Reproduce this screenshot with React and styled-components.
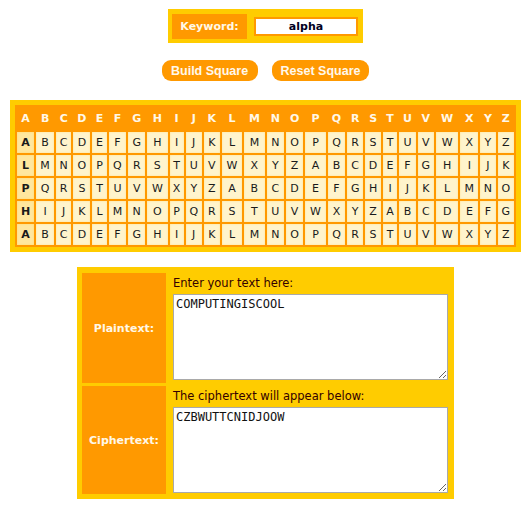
import React from "react";
import styled, { createGlobalStyle } from "styled-components";

const ALPHABET = "ABCDEFGHIJKLMNOPQRSTUVWXYZ".split("");
const KEYWORD = "alpha";

const shifted = (letter) => {
  const start = ALPHABET.indexOf(letter);
  return ALPHABET.map((_, i) => ALPHABET[(start + i) % 26]);
};

const App = () => {
  const rows = KEYWORD.toUpperCase().split("");

  return (
    <Page>
      <GlobalStyle />
      <KeywordBox>
        <KeywordLabel>Keyword:</KeywordLabel>
        <KeywordInput type="text" defaultValue={KEYWORD} />
      </KeywordBox>

      <ButtonRow>
        <PillButton>Build Square</PillButton>
        <PillButton>Reset Square</PillButton>
      </ButtonRow>

      <SquareFrame>
        <Square>
          <thead>
            <tr>
              {ALPHABET.map((l) => (
                <HeadCell key={l}>{l}</HeadCell>
              ))}
            </tr>
          </thead>
          <tbody>
            {rows.map((r, ri) => (
              <tr key={ri}>
                {shifted(r).map((l, ci) => (
                  <Cell key={ci} $key={ci === 0}>
                    {l}
                  </Cell>
                ))}
              </tr>
            ))}
          </tbody>
        </Square>
      </SquareFrame>

      <FormBox>
        <SideLabel>Plaintext:</SideLabel>
        <FieldCell>
          <Hint>Enter your text here:</Hint>
          <TextBox defaultValue="COMPUTINGISCOOL" />
        </FieldCell>
        <SideLabel>Ciphertext:</SideLabel>
        <FieldCell>
          <Hint>The ciphertext will appear below:</Hint>
          <TextBox defaultValue="CZBWUTTCNIDJOOW" $last />
        </FieldCell>
      </FormBox>
    </Page>
  );
};

export default App;

const GlobalStyle = createGlobalStyle`
  body {
    margin: 0;
    background: #fff;
    font-family: "DejaVu Sans", Verdana, sans-serif;
  }
`;

const Page = styled.div`
  display: flex;
  flex-direction: column;
  align-items: center;
  padding-top: 9px;
  width: 531px;
`;

const KeywordBox = styled.div`
  display: flex;
  align-items: center;
  gap: 7px;
  background: #ffcc00;
  padding: 5px 5px 4px 4px;
`;

const KeywordLabel = styled.div`
  width: 75px;
  height: 25px;
  display: flex;
  align-items: center;
  justify-content: center;
  background: #ff9900;
  color: #fff8e8;
  font-size: 11px;
  font-weight: bold;
`;

const KeywordInput = styled.input`
  box-sizing: border-box;
  width: 104px;
  height: 19px;
  border: 2px solid #ff9900;
  background: #fff;
  text-align: center;
  font-family: "DejaVu Sans", Verdana, sans-serif;
  font-size: 11px;
  font-weight: bold;
  color: #000022;
  padding: 0;
  outline: none;
`;

const ButtonRow = styled.div`
  display: flex;
  gap: 14px;
  margin-top: 17px;
`;

const PillButton = styled.button`
  height: 21px;
  padding: 0 9px;
  min-width: 96px;
  border: 0;
  border-radius: 9px;
  background: #ff9900;
  color: #fff8ec;
  font-family: "Liberation Sans", Arial, sans-serif;
  font-size: 12.5px;
  font-weight: bold;
  cursor: pointer;
`;

const SquareFrame = styled.div`
  margin-top: 19px;
  background: #ffcc00;
  padding: 5px;
`;

const Square = styled.table`
  width: 501px;
  background: #ff9900;
  border-spacing: 2px;
  font-size: 11px;
`;

const HeadCell = styled.th`
  height: 23px;
  padding: 0;
  color: #fff8e8;
  font-weight: bold;
  text-align: center;
`;

const Cell = styled.td`
  height: 21px;
  padding: 0;
  text-align: center;
  color: #1a1a1a;
  font-weight: ${(p) => (p.$key ? "bold" : "normal")};
  background: ${(p) => (p.$key ? "#ffe79e" : "#fff4cc")};
  box-shadow: inset 0 0 2px ${(p) => (p.$key ? "#ffd966" : "#ffe08a")};
`;

const FormBox = styled.div`
  margin-top: 15px;
  width: 377px;
  box-sizing: border-box;
  display: grid;
  grid-template-columns: 84px 1fr;
  column-gap: 7px;
  row-gap: 3px;
  padding: 6px 6px 5px 5px;
  background: #ffcc00;
`;

const SideLabel = styled.div`
  display: flex;
  align-items: center;
  justify-content: center;
  background: #ff9900;
  color: #fff8e8;
  font-size: 11px;
  font-weight: bold;
`;

const FieldCell = styled.div`
  display: flex;
  flex-direction: column;
  padding-top: 4px;
`;

const Hint = styled.div`
  color: #330000;
  font-size: 11.5px;
  line-height: 13px;
  margin-bottom: 4px;
`;

const TextBox = styled.textarea`
  box-sizing: border-box;
  width: 275px;
  height: 86px;
  margin: 0 0 ${(p) => (p.$last ? "1px" : "3px")};
  padding: 2px;
  border: 1px solid #a9a9a9;
  font-family: "DejaVu Sans Mono", "Liberation Mono", monospace;
  font-size: 12px;
  color: #111;
  resize: both;
`;
